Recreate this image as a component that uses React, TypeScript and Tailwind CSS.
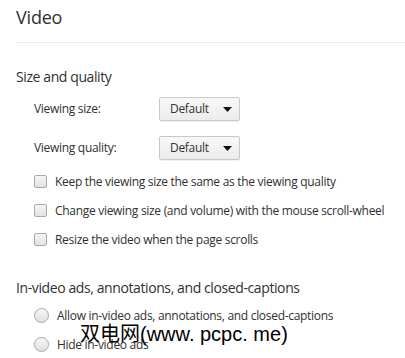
import React from "react";

const font = { fontFamily: '"Open Sans", "Noto Sans CJK SC", sans-serif' };

function Select() {
  return (
    <div className="flex h-[24px] w-[81px] items-center justify-between rounded-[2px] border border-[#c9c9c9] bg-gradient-to-b from-[#f8f8f8] to-[#ececec] pl-[10px] pr-[7px] text-[12px] tracking-[-0.3px] text-[#333] shadow-[0_1px_0_rgba(0,0,0,0.06)]">
      <span>Default</span>
      <svg width="9" height="5" viewBox="0 0 9 5">
        <path d="M0 0h9L4.5 5z" fill="#111" />
      </svg>
    </div>
  );
}

function Check({ label }: { label: string }) {
  return (
    <div className="flex h-[29px] items-center pl-[34px]">
      <span className="mr-[8px] h-[13px] w-[13px] rounded-[2px] border border-[#a9a9a9] bg-gradient-to-b from-[#f6f6f6] to-[#e2e2e2]" />
      <span className="text-[12px] tracking-[-0.3px] text-[#303030]">{label}</span>
    </div>
  );
}

function Radio({ label }: { label: string }) {
  return (
    <div className="flex h-[29px] items-center pl-[34px]">
      <span className="mr-[8px] h-[15px] w-[15px] rounded-full border border-[#a9a9a9] bg-gradient-to-b from-[#f8f8f8] to-[#e0e0e0]" />
      <span className="text-[12px] tracking-[-0.3px] text-[#303030]">{label}</span>
    </div>
  );
}

export default function App() {
  return (
    <div className="relative h-[358px] w-[405px] overflow-hidden bg-white" style={font}>
      <h1 className="pl-[16px] pt-[4px] text-[18px] font-normal leading-[26px] tracking-[-0.2px] text-[#303030]">Video</h1>
      <div className="ml-[16px] mt-[12px] h-px bg-[#e8e8e8]" />

      <h2 className="mt-[25px] pl-[16px] text-[14px] leading-[18px] tracking-[-0.4px] text-[#303030]">Size and quality</h2>

      <div className="mt-[11px] flex items-center pl-[34px]">
        <span className="w-[125px] text-[12px] tracking-[-0.3px] text-[#303030]">Viewing size:</span>
        <Select />
      </div>
      <div className="mt-[15px] flex items-center pl-[34px]">
        <span className="w-[125px] text-[12px] tracking-[-0.3px] text-[#303030]">Viewing quality:</span>
        <Select />
      </div>

      <div className="mt-[7px]">
        <Check label="Keep the viewing size the same as the viewing quality" />
        <Check label="Change viewing size (and volume) with the mouse scroll-wheel" />
        <Check label="Resize the video when the page scrolls" />
      </div>

      <h2 className="mt-[25px] pl-[16px] text-[14px] leading-[18px] tracking-[-0.4px] text-[#303030]">
        In-video ads, annotations, and closed-captions
      </h2>

      <div className="mt-[4px]">
        <Radio label="Allow in-video ads, annotations, and closed-captions" />
        <Radio label="Hide in-video ads" />
      </div>

      <div
        className="absolute left-[80px] top-[322px] text-[20px] leading-[24px] text-black"
        style={{ fontFamily: '"Liberation Sans", "Noto Sans CJK SC", sans-serif' }}
      >
        双电网(www. pcpc. me)
      </div>
    </div>
  );
}
